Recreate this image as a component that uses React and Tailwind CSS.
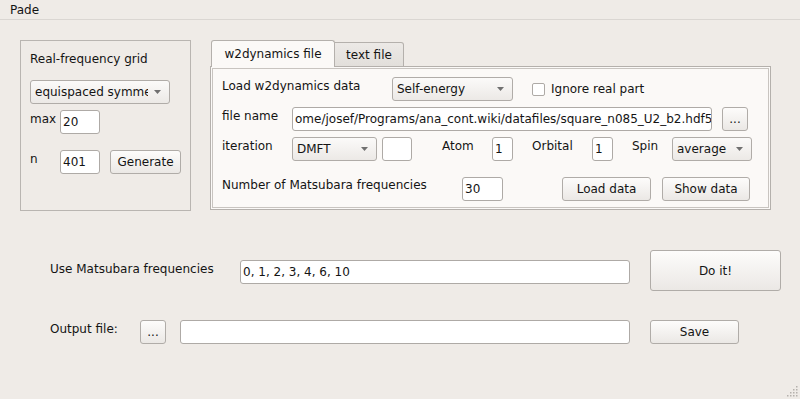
import React from "react";

const FONT = { fontFamily: '"DejaVu Sans", "Liberation Sans", sans-serif' };

function Arrow() {
  return (
    <svg width="7" height="4" viewBox="0 0 7 4" className="shrink-0">
      <path d="M0 0 L7 0 L3.5 4 Z" fill="#707070" />
    </svg>
  );
}

function Combo({ text, className = "" }) {
  return (
    <div
      className={`flex items-center h-[24px] border border-[#b0aca8] rounded-[3px] bg-linear-to-b from-[#fbfaf9] to-[#ece9e6] pl-[4px] pr-[8px] ${className}`}
    >
      <span className="flex-1 overflow-hidden whitespace-nowrap mr-[6px]">{text}</span>
      <Arrow />
    </div>
  );
}

function Input({ text = "", className = "" }) {
  return (
    <div
      className={`flex items-center h-[24px] border border-[#aeaaa6] rounded-[3px] bg-white pl-[2px] overflow-hidden whitespace-nowrap ${className}`}
    >
      {text}
    </div>
  );
}

function Button({ text, className = "" }) {
  return (
    <div
      className={`flex items-center justify-center h-[24px] border border-[#b0aca8] rounded-[3px] bg-linear-to-b from-[#fdfcfb] to-[#ebe8e5] whitespace-nowrap ${className}`}
    >
      {text}
    </div>
  );
}

export default function App() {
  return (
    <div
      className="relative w-[800px] h-[399px] overflow-hidden bg-[#efebe7] text-[12px] leading-[14px] text-[#141414]"
      style={FONT}
    >
      {/* menu bar */}
      <div className="h-[20px] border-b border-[#dad6d2] pl-[10px] pt-[3px]">Pade</div>

      {/* upper section */}
      <div className="flex mt-[20px] h-[171px]">
        {/* group box */}
        <div className="ml-[20px] w-[171px] h-[171px] border border-[#b9b5b1] px-[9px] pt-[11px]">
          <div>Real-frequency grid</div>
          <Combo text="equispaced symmetric" className="mt-[14px] w-[140px]" />
          <div className="flex mt-[6px]">
            <div className="w-[30px] pt-[2px]">max</div>
            <Input text="20" className="w-[40px]" />
          </div>
          <div className="flex mt-[16px]">
            <div className="w-[30px] pt-[2px]">n</div>
            <Input text="401" className="w-[40px]" />
            <Button text="Generate" className="ml-[10px] w-[71px]" />
          </div>
        </div>

        {/* tab widget */}
        <div className="ml-[19px] flex flex-col">
          <div className="flex items-end h-[27px] -mb-[1px] pl-[1px] relative z-10">
            <div className="h-[27px] w-[124px] border border-b-0 border-[#b4b0ac] rounded-t-[3px] bg-[#fbf9f7] flex justify-center pt-[6px]">
              w2dynamics file
            </div>
            <div className="h-[25px] w-[69px] border border-l-0 border-[#b4b0ac] rounded-tr-[3px] bg-linear-to-b from-[#ece9e6] to-[#e2dfdb] flex justify-center pt-[5px]">
              text file
            </div>
          </div>
          <div className="w-[561px] h-[144px] border border-[#b4b0ac] bg-[#fbf9f7] p-[1px]">
            <div className="h-full border border-[#c8c4c0] pl-[9px] pt-[8px]">
              {/* row 1 */}
              <div className="flex h-[24px]">
                <div className="w-[170px] pt-[2px]">Load w2dynamics data</div>
                <Combo text="Self-energy" className="w-[121px]" />
                <div className="flex items-center ml-[19px]">
                  <div className="w-[13px] h-[13px] border border-[#aeaaa6] rounded-[2px] bg-white" />
                  <span className="ml-[6px]">Ignore real part</span>
                </div>
              </div>
              {/* row 2 */}
              <div className="flex h-[24px] mt-[6px]">
                <div className="w-[70px] pt-[2px]">file name</div>
                <Input
                  text="ome/josef/Programs/ana_cont.wiki/datafiles/square_n085_U2_b2.hdf5"
                  className="w-[420px]"
                />
                <Button text="..." className="ml-[10px] w-[26px]" />
              </div>
              {/* row 3 */}
              <div className="flex h-[24px] mt-[6px]">
                <div className="w-[70px] pt-[2px]">iteration</div>
                <Combo text="DMFT" className="w-[85px]" />
                <Input className="ml-[5px] w-[30px]" />
                <div className="ml-[30px] w-[50px] pt-[2px]">Atom</div>
                <Input text="1" className="w-[21px]" />
                <div className="ml-[19px] w-[60px] pt-[2px]">Orbital</div>
                <Input text="1" className="w-[21px]" />
                <div className="ml-[19px] w-[40px] pt-[2px]">Spin</div>
                <Combo text="average" className="w-[80px]" />
              </div>
              {/* row 4 */}
              <div className="flex h-[24px] mt-[16px]">
                <div className="w-[240px] pt-[1px]">Number of Matsubara frequencies</div>
                <Input text="30" className="w-[41px]" />
                <Button text="Load data" className="ml-[59px] w-[89px]" />
                <Button text="Show data" className="ml-[11px] w-[88px]" />
              </div>
            </div>
          </div>
        </div>
      </div>

      {/* bottom rows */}
      <div className="flex items-start h-[41px] mt-[39px] pl-[50px]">
        <div className="w-[190px] pt-[12px]">Use Matsubara frequencies</div>
        <Input text="0, 1, 2, 3, 4, 6, 10" className="mt-[10px] w-[390px]" />
        <Button text="Do it!" className="ml-[20px] w-[131px] h-[41px]" />
      </div>
      <div className="flex items-start h-[24px] mt-[29px] pl-[50px]">
        <div className="w-[90px] pt-[2px]">Output file:</div>
        <Button text="..." className="w-[26px]" />
        <Input className="ml-[14px] w-[450px]" />
        <Button text="Save" className="ml-[20px] w-[89px]" />
      </div>

      {/* size grip */}
      <svg className="absolute right-[2px] bottom-[2px]" width="11" height="11" viewBox="0 0 11 11">
        {[
          [9, 1],
          [9, 4],
          [6, 4],
          [9, 7],
          [6, 7],
          [3, 7],
          [9, 10],
          [6, 10],
          [3, 10],
          [0, 10],
        ].map(([x, y], i) => (
          <rect key={i} x={x} y={y - 1} width="1.5" height="1.5" fill="#b5b1ad" />
        ))}
      </svg>
    </div>
  );
}
